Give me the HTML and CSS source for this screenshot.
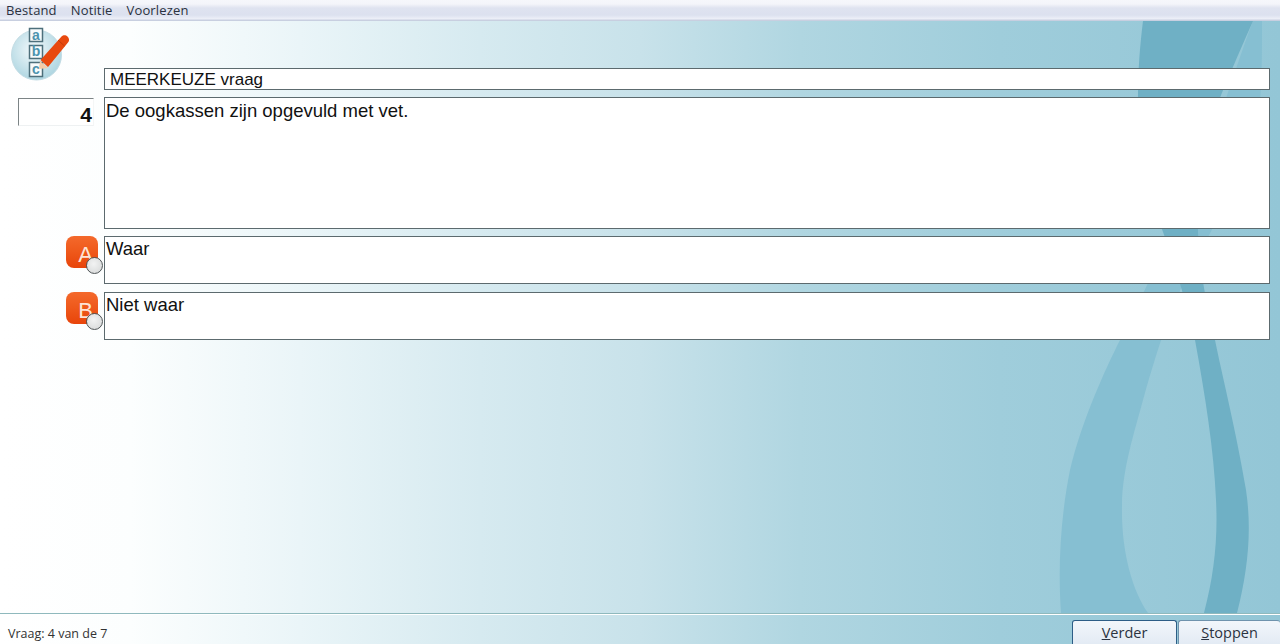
FILE: index.html
```html
<!DOCTYPE html>
<html lang="nl">
<head>
<meta charset="utf-8">
<title>Meerkeuze vraag</title>
<link rel="stylesheet" href="styles.css">
</head>
<body>
<div class="app">
  <svg class="backdrop" width="1280" height="644" viewBox="0 0 1280 644" aria-hidden="true">
    <path class="band-light" d="M1253 21 H1262 C1262 60 1262 90 1258 120 C1240 180 1215 225 1190 270 C1172 305 1160 340 1143 400 C1135 430 1122 470 1122 505 C1121 550 1132 590 1148 613 H1061 C1058 570 1060 520 1070 470 C1082 420 1105 370 1120 340 C1140 300 1170 240 1200 170 C1220 120 1238 60 1253 21 Z"/>
    <path class="band-dark" d="M1143 21 H1253 C1238 55 1225 85 1215 110 C1205 140 1197 190 1198 232 C1199 270 1208 310 1215 340 C1222 375 1236 430 1246 490 C1252 530 1248 570 1237 613 H1204 C1214 575 1218 540 1216 500 C1214 450 1205 395 1195 340 C1187 305 1175 265 1163 232 C1148 190 1137 130 1138 97 C1138 70 1140 45 1143 21 Z"/>
  </svg>

  <nav class="menu">
    <span class="menu-item">Bestand</span>
    <span class="menu-item">Notitie</span>
    <span class="menu-item">Voorlezen</span>
  </nav>

  <main class="content">
    <svg class="logo" width="62" height="58" viewBox="0 0 62 58" aria-hidden="true">
      <defs>
        <radialGradient id="disc" cx="45%" cy="40%" r="65%">
          <stop offset="0" stop-color="#f4fafc"/>
          <stop offset="1" stop-color="#a9d3df"/>
        </radialGradient>
      </defs>
      <circle cx="26.500" cy="28" r="25" fill="url(#disc)" stroke="#c3dce4"/>
      <g class="logo-box">
        <rect x="19.500" y="1.500" width="13" height="13"/>
        <rect x="19.500" y="18.500" width="13" height="13"/>
        <rect x="19.500" y="35.500" width="13" height="14"/>
      </g>
      <text class="logo-letter" x="26" y="12.500">a</text>
      <text class="logo-letter" x="26" y="29">b</text>
      <text class="logo-letter" x="26" y="46.500">c</text>
      <path d="M30 34 L38 41 L29 42 Z" fill="#f5cba6"/>
      <path d="M30.500 33 L51.500 9.500 C53.500 7.500 56 8 57.500 9.500 C59.500 11.500 59.500 14 58 15.500 L38 40 Z" fill="#e8490f"/>
      <path d="M48 13 L54.500 19" stroke="#c23c08" stroke-width="1" fill="none"/>
    </svg>

    <div class="title-row">
      <div class="field title">MEERKEUZE vraag</div>
    </div>

    <div class="question-row">
      <div class="number">4</div>
      <div class="field question">De oogkassen zijn opgevuld met vet.</div>
    </div>

    <div class="answer-row">
      <div class="badge">A<span class="radio"></span></div>
      <div class="field answer">Waar</div>
    </div>

    <div class="answer-row">
      <div class="badge">B<span class="radio"></span></div>
      <div class="field answer">Niet waar</div>
    </div>
  </main>

  <footer class="status">
    <span class="status-text">Vraag: 4 van de 7</span>
    <div class="buttons">
      <button class="btn" type="button"><u>V</u>erder</button>
      <button class="btn btn-last" type="button"><u>S</u>toppen</button>
    </div>
  </footer>
</div>
</body>
</html>
```

FILE: styles.css
```css
* {
  box-sizing: border-box;
}

html,
body {
  margin: 0;
  height: 100%;
  overflow: hidden;
}

.app {
  position: relative;
  width: 1280px;
  height: 644px;
  display: flex;
  flex-direction: column;
  overflow: hidden;
  font-family: "Liberation Sans", Arial, sans-serif;
  color: #111;
  background: linear-gradient(90deg, #ffffff 0, #fcfefe 130px, #eaf5f8 300px, #d6eaf0 480px, #c8e2ea 640px, #b0d6e1 800px, #9fcddb 1000px, #93c6d6 1280px);
}

.backdrop {
  position: absolute;
  left: 0;
  top: 0;
}

.band-light {
  fill: #86bfd2;
}

.band-dark {
  fill: #6fb0c5;
}

.menu {
  position: relative;
  height: 21px;
  flex: none;
  display: flex;
  gap: 14px;
  padding: 1px 6px 0;
  align-items: flex-start;
  font-family: "Open Sans", sans-serif;
  font-size: 13px;
  letter-spacing: 0.150px;
  line-height: 18px;
  color: #2a3140;
  background: linear-gradient(180deg, #f6f7fb 0, #f4f5fa 4px, #dfe3f0 8px, #dce1ef 15px, #eef0f8 19px, #c8cfe0 20px);
}

.content {
  position: relative;
  flex: 1;
  display: flex;
  flex-direction: column;
  gap: 8px;
  padding: 47px 10px 0 0;
}

.logo {
  position: absolute;
  left: 10px;
  top: 6px;
}

.logo-box rect {
  fill: #f7fbfc;
  stroke: #4d6f7b;
  stroke-width: 1.500;
}

.logo-letter {
  font-family: "Liberation Sans", Arial, sans-serif;
  font-size: 14px;
  font-weight: 700;
  fill: #4c93ae;
  text-anchor: middle;
}

.title-row,
.question-row,
.answer-row {
  display: flex;
  padding-left: 104px;
  position: relative;
}

.title-row {
  margin-bottom: -1px;
}

.question-row {
  margin-bottom: -1px;
}

.field {
  flex: 1;
  background: #fff;
  border: 1px solid #5c6a6e;
  font-size: 18.500px;
  line-height: 22px;
  color: #111;
}

.title {
  height: 22px;
  padding: 0 5px;
  font-size: 17px;
  line-height: 21px;
}

.question {
  height: 132px;
  padding: 2px 1px;
}

.answer {
  height: 48px;
  padding: 1px 1px;
}

.number {
  position: absolute;
  left: 18px;
  top: 1px;
  width: 76px;
  height: 28px;
  padding: 3px 1px 0 0;
  text-align: right;
  font-size: 21px;
  line-height: 25px;
  font-weight: 700;
  background: #fff;
  border-top: 1px solid #7c8486;
  border-left: 1px solid #7c8486;
  border-right: 1px solid #f4f6f6;
  border-bottom: 1px solid #eef1f2;
}

.badge {
  position: absolute;
  left: 66px;
  top: 0;
  width: 32px;
  height: 32px;
  padding-left: 7px;
  border-radius: 8px;
  background: linear-gradient(180deg, #f4692c 0, #ef5a1c 45%, #e8440a 100%);
  color: #fde3d6;
  font-size: 22px;
  line-height: 37px;
  text-align: center;
}

.radio {
  position: absolute;
  left: 20px;
  top: 21px;
  width: 17px;
  height: 17px;
  border-radius: 50%;
  background: radial-gradient(circle at 45% 40%, #f2f3f3 0, #d4d6d6 100%);
  border: 1px solid #4f5557;
}

.status {
  position: relative;
  height: 31px;
  flex: none;
  display: flex;
  justify-content: space-between;
  align-items: flex-end;
  border-top: 1px solid #8fb9bd;
  box-shadow: inset 0 1px 0 #ffffff;
}

.status-text {
  font-family: "Open Sans", sans-serif;
  font-size: 12.500px;
  line-height: 16px;
  color: #333;
  padding: 0 0 2px 8px;
}

.buttons {
  display: flex;
  gap: 1px;
}

.btn {
  width: 105px;
  height: 24px;
  padding: 0;
  font-family: "Open Sans", sans-serif;
  font-size: 14.500px;
  line-height: 20px;
  color: #2b3340;
  background: linear-gradient(180deg, #f2f6fb 0, #e3ebf4 100%);
  border: 1px solid #2d5d86;
  border-bottom: 0;
  border-radius: 3px 3px 0 0;
}

.btn-last {
  width: 102px;
  border-right: 0;
  border-color: #6f93ad;
}
```
